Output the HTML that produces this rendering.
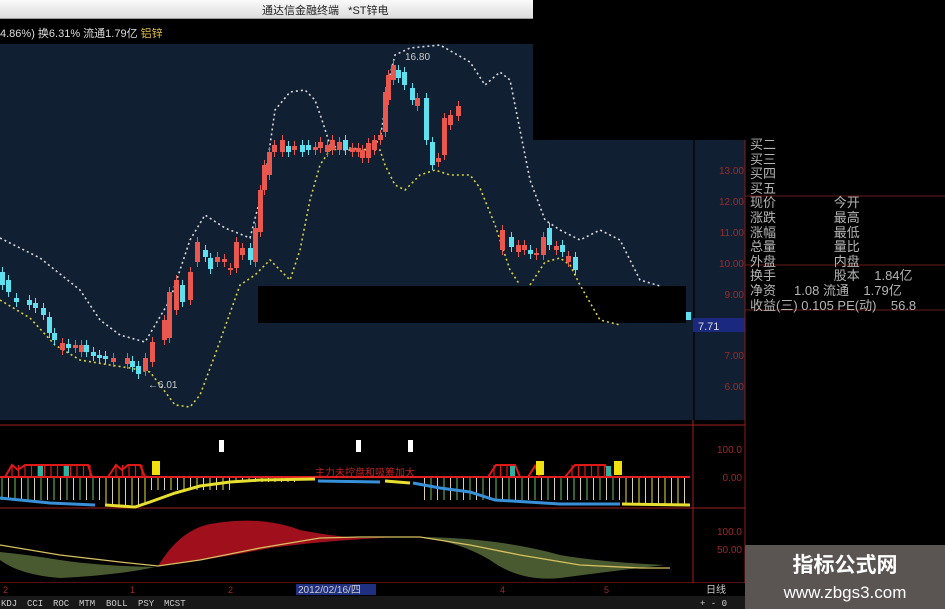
<!DOCTYPE html>
<html><head><meta charset="utf-8"><style>
html,body{margin:0;padding:0;background:#000;width:945px;height:609px;overflow:hidden;font-family:"Liberation Sans","Noto Sans CJK SC",sans-serif}
.a{position:absolute}
.rt{color:#b4b4b4;font-size:13px;line-height:14.6px;white-space:pre}
</style></head><body>
<div class="a" style="left:0;top:0;width:533px;height:18px;background:linear-gradient(#fafafa,#dcdcdc);border-bottom:1px solid #999"></div>
<div class="a" style="left:262px;top:2px;font-size:11px;color:#222">通达信金融终端 &nbsp; *ST锌电</div>
<div class="a" style="left:0;top:25px;font-size:11px;color:#ddd">4.86%) 换6.31% 流通1.79亿 <span style="color:#e0c040">铝锌</span></div>
<svg class="a" style="left:0;top:0" width="945" height="609">
<rect x="0" y="44" width="533" height="100" fill="#102032"/>
<rect x="0" y="140" width="745" height="280" fill="#102032"/>
<rect x="693" y="140" width="2" height="280" fill="#0a0a14"/>
<rect x="258" y="286" width="428" height="37" fill="#000"/>
<rect x="693" y="318" width="52" height="14" fill="#1a2880"/>
<text x="698" y="330" font-size="11" fill="#ddd">7.71</text>
<rect x="686" y="312" width="5" height="8" fill="#5ee0ee"/>
<g font-size="10" fill="#a02828" text-anchor="end">
<text x="744" y="174">13.00</text><text x="744" y="205">12.00</text><text x="744" y="236">11.00</text><text x="744" y="267">10.00</text><text x="744" y="298">9.00</text><text x="744" y="359">7.00</text><text x="744" y="390">6.00</text></g>
<line x1="745" y1="140" x2="745" y2="609" stroke="#8a1c1c"/>
<line x1="745" y1="196" x2="945" y2="196" stroke="#6a1c1c"/>
<line x1="745" y1="265" x2="945" y2="265" stroke="#6a1c1c"/>
<line x1="745" y1="310" x2="945" y2="310" stroke="#6a1c1c"/>
<polyline fill="none" stroke="#d8d8d8" stroke-width="1.6" stroke-dasharray="2,3" points="0,238 40,258 80,290 100,320 120,335 145,342 170,300 190,240 205,215 225,228 250,238 265,180 275,110 290,92 305,90 315,100 322,120 330,145 345,150 365,150 380,140 390,75 395,55 410,48 440,45 470,62 485,85 500,72 510,80 520,130 530,180 545,220 560,230 580,240 600,230 620,240 640,280 660,286"/>
<polyline fill="none" stroke="#d8d040" stroke-width="1.6" stroke-dasharray="2,3" points="0,300 30,318 55,345 80,360 110,365 130,368 150,372 160,385 175,405 190,407 200,395 215,355 240,285 255,275 270,260 290,280 300,250 310,200 320,165 330,150 350,148 370,150 380,150 385,165 395,185 405,190 420,175 435,170 450,175 470,175 480,188 495,225 510,270 520,285"/>
<polyline fill="none" stroke="#d8d040" stroke-width="1.6" stroke-dasharray="2,3" points="530,285 545,262 560,258 570,265 580,285 600,320 620,325"/>
<g id="c"></g>
<text x="405" y="60" font-size="10" fill="#ccc">16.80</text>
<text x="148" y="388" font-size="10" fill="#ccc">←6.01</text>
<line x1="0" y1="425" x2="745" y2="425" stroke="#a02020"/>
<line x1="0" y1="508" x2="745" y2="508" stroke="#a02020"/>
<line x1="0" y1="583" x2="745" y2="583" stroke="#a02020"/>
<line x1="693" y1="420" x2="693" y2="595" stroke="#a02020"/>
<g font-size="10" fill="#a02828" text-anchor="end"><text x="742" y="453">100.0</text><text x="742" y="481">0.00</text><text x="742" y="535">100.0</text><text x="742" y="553">50.00</text></g>
<rect x="219" y="440" width="5" height="12" fill="#fff"/><rect x="356" y="440" width="5" height="12" fill="#fff"/><rect x="408" y="440" width="5" height="12" fill="#fff"/>
<line x1="0" y1="477" x2="690" y2="477" stroke="#e02020" stroke-width="2"/>
<g id="v"></g>
<polyline fill="none" stroke="#3890d8" stroke-width="3" points="0,498 50,503 95,505"/>
<polyline fill="none" stroke="#e8e030" stroke-width="3" points="105,505 135,507 150,502 175,493 200,486 230,482 260,480 315,479"/>
<polyline fill="none" stroke="#3890d8" stroke-width="3" points="318,481 380,482"/>
<polyline fill="none" stroke="#e8e030" stroke-width="3" points="385,481 410,483"/>
<polyline fill="none" stroke="#3890d8" stroke-width="3" points="413,483 440,488 470,492 495,500 560,504 620,504"/>
<polyline fill="none" stroke="#e8e030" stroke-width="3" points="622,504 690,505"/>
<g fill="none" stroke="#e01818" stroke-width="2"><polyline points="5,477 12,465 18,470 25,465 88,465 92,477"/><polyline points="108,477 116,465 122,470 128,465 140,465 145,477"/><polyline points="488,477 496,465 515,465 520,477"/><polyline points="528,477 535,466 540,477"/><polyline points="565,477 575,465 605,465 612,477"/></g>
<g id="rb" stroke="#e01818" stroke-width="1.2"></g>
<g fill="#30b0a0"><rect x="38" y="466" width="5" height="10"/><rect x="64" y="466" width="5" height="10"/><rect x="510" y="466" width="5" height="10"/><rect x="606" y="466" width="5" height="10"/></g>
<g fill="#f0e010"><rect x="152" y="461" width="8" height="14"/><rect x="536" y="461" width="8" height="14"/><rect x="614" y="461" width="8" height="14"/></g>
<text x="315" y="476" font-size="10" fill="#c02020">主力未控盘和吸筹加大</text>
<path d="M158,566 Q180,530 210,524 Q260,515 300,530 Q330,536 360,538 L400,537 Q330,540 270,548 Q210,560 158,566Z" fill="#a0101c"/>
<path d="M0,560 Q20,575 60,578 Q120,575 155,567 Q100,566 60,560 Q30,555 0,552Z" fill="#4a5a30"/>
<path d="M420,537 Q460,542 490,560 Q520,582 560,578 Q620,570 665,565 Q600,562 560,555 Q500,538 420,537Z" fill="#4a5a30"/>
<polyline fill="none" stroke="#d8c060" stroke-width="1.3" points="0,545 60,555 120,562 158,566 200,560 260,548 320,538 360,537 420,537 470,545 520,555 580,565 640,568 670,568"/>
<rect x="0" y="583" width="745" height="13" fill="#000"/>
<rect x="296" y="584" width="80" height="11" fill="#203080"/>
<text x="298" y="593" font-size="10" fill="#ccc">2012/02/16/四</text>
<g font-size="9" fill="#a02828"><text x="3" y="593">2</text><text x="130" y="593">1</text><text x="228" y="593">2</text><text x="500" y="593">4</text><text x="604" y="593">5</text></g>
<text x="706" y="593" font-size="10" fill="#ccc">日线</text>
<rect x="0" y="596" width="745" height="13" fill="#181818"/>
<g font-size="9" fill="#ccc" font-family="Liberation Mono"><text x="1" y="606">KDJ</text><text x="27" y="606">CCI</text><text x="53" y="606">ROC</text><text x="79" y="606">MTM</text><text x="106" y="606">BOLL</text><text x="138" y="606">PSY</text><text x="164" y="606">MCST</text><text x="700" y="606">+  -  0</text></g>
<rect x="745" y="545" width="200" height="64" fill="#5a5452"/>
<text x="845" y="572" font-size="21" font-weight="bold" fill="#fff" text-anchor="middle" font-family="Noto Sans CJK SC,sans-serif">指标公式网</text>
<text x="845" y="598" font-size="17" fill="#fff" text-anchor="middle">www.zbgs3.com</text>
</svg>
<div class="a rt" style="left:750px;top:138px">买二
买三
买四
买五
现价                今开
涨跌                最高
涨幅                最低
总量                量比
外盘                内盘
换手                股本    1.84亿
净资     1.08 流通    1.79亿
收益(三) 0.105 PE(动)    56.8</div>
<script>
var d=[[0,272,285,0],[6,280,292,0],[14,298,302,0],[27,300,305,0],[33,303,308,0],[41,308,315,0],[47,317,333,0],[52,333,340,0],[60,343,350,1],[66,344,348,0],[73,345,348,1],[79,345,352,1],[84,345,352,0],[91,352,356,0],[97,355,358,0],[103,356,359,0],[111,358,362,1],[125,358,364,1],[130,361,367,0],[136,366,374,0],[143,358,371,1],[150,342,362,1],[162,320,340,1],[167,292,338,1],[174,280,310,1],[180,285,302,0],[188,272,300,1],[195,242,262,1],[203,250,257,0],[208,258,269,0],[215,257,262,1],[222,259,262,1],[228,268,270,1],[234,242,268,1],[240,248,255,1],[248,248,260,0],[253,228,262,1],[258,190,232,1],[262,165,190,1],[267,152,175,1],[272,145,152,1],[280,140,152,1],[286,146,152,0],[292,146,150,1],[300,145,152,0],[306,145,150,0],[313,147,150,1],[318,142,148,1],[325,145,152,1],[330,140,150,1],[337,142,150,1],[343,140,150,0],[350,148,152,1],[356,148,152,1],[360,150,158,1],[366,143,158,1],[372,140,150,1],[378,135,140,1],[383,92,132,1],[386,75,100,1],[391,65,80,1],[396,70,78,0],[402,72,85,0],[410,88,100,0],[415,98,106,1],[424,98,140,0],[430,142,165,0],[436,158,162,1],[442,118,155,1],[448,115,125,1],[456,106,116,1],[500,230,250,1],[509,237,247,0],[516,245,252,1],[522,245,250,1],[528,250,254,0],[534,253,255,1],[541,237,255,1],[547,228,245,0],[554,246,250,1],[560,245,252,0],[566,256,262,1],[573,257,270,0]];
var s='';d.forEach(function(c){var col=c[3]?'#e8584f':'#5ee0ee';s+='<line x1="'+(c[0]+2.5)+'" x2="'+(c[0]+2.5)+'" y1="'+(c[1]-5)+'" y2="'+(c[2]+5)+'" stroke="'+col+'"/><rect x="'+c[0]+'" y="'+c[1]+'" width="5" height="'+Math.max(2,c[2]-c[1])+'" fill="'+col+'"/>';});
document.getElementById('c').innerHTML=s;
var v='',i=0;for(var x=2;x<690;x+=6.5){i++;var by=x<100?500:(x<150?505:(x<420?(x<230?490:482):(x<620?500:504)));if(x>300&&x<420)continue;var col=(x<100||(x>420&&x<620))?(i%2?'#70c060':'#d8d0b0'):(i%2?'#e8e040':'#d8d0b0');v+='<line x1="'+x+'" x2="'+x+'" y1="478" y2="'+by+'" stroke="'+col+'"/>';}
document.getElementById('v').innerHTML=v;
var r='';[[12,90],[116,142],[494,518],[572,610]].forEach(function(a){for(var x=a[0];x<=a[1];x+=6.5)r+='<line x1="'+x+'" x2="'+x+'" y1="465" y2="477"/>';});
document.getElementById('rb').innerHTML=r;
</script>
</body></html>
